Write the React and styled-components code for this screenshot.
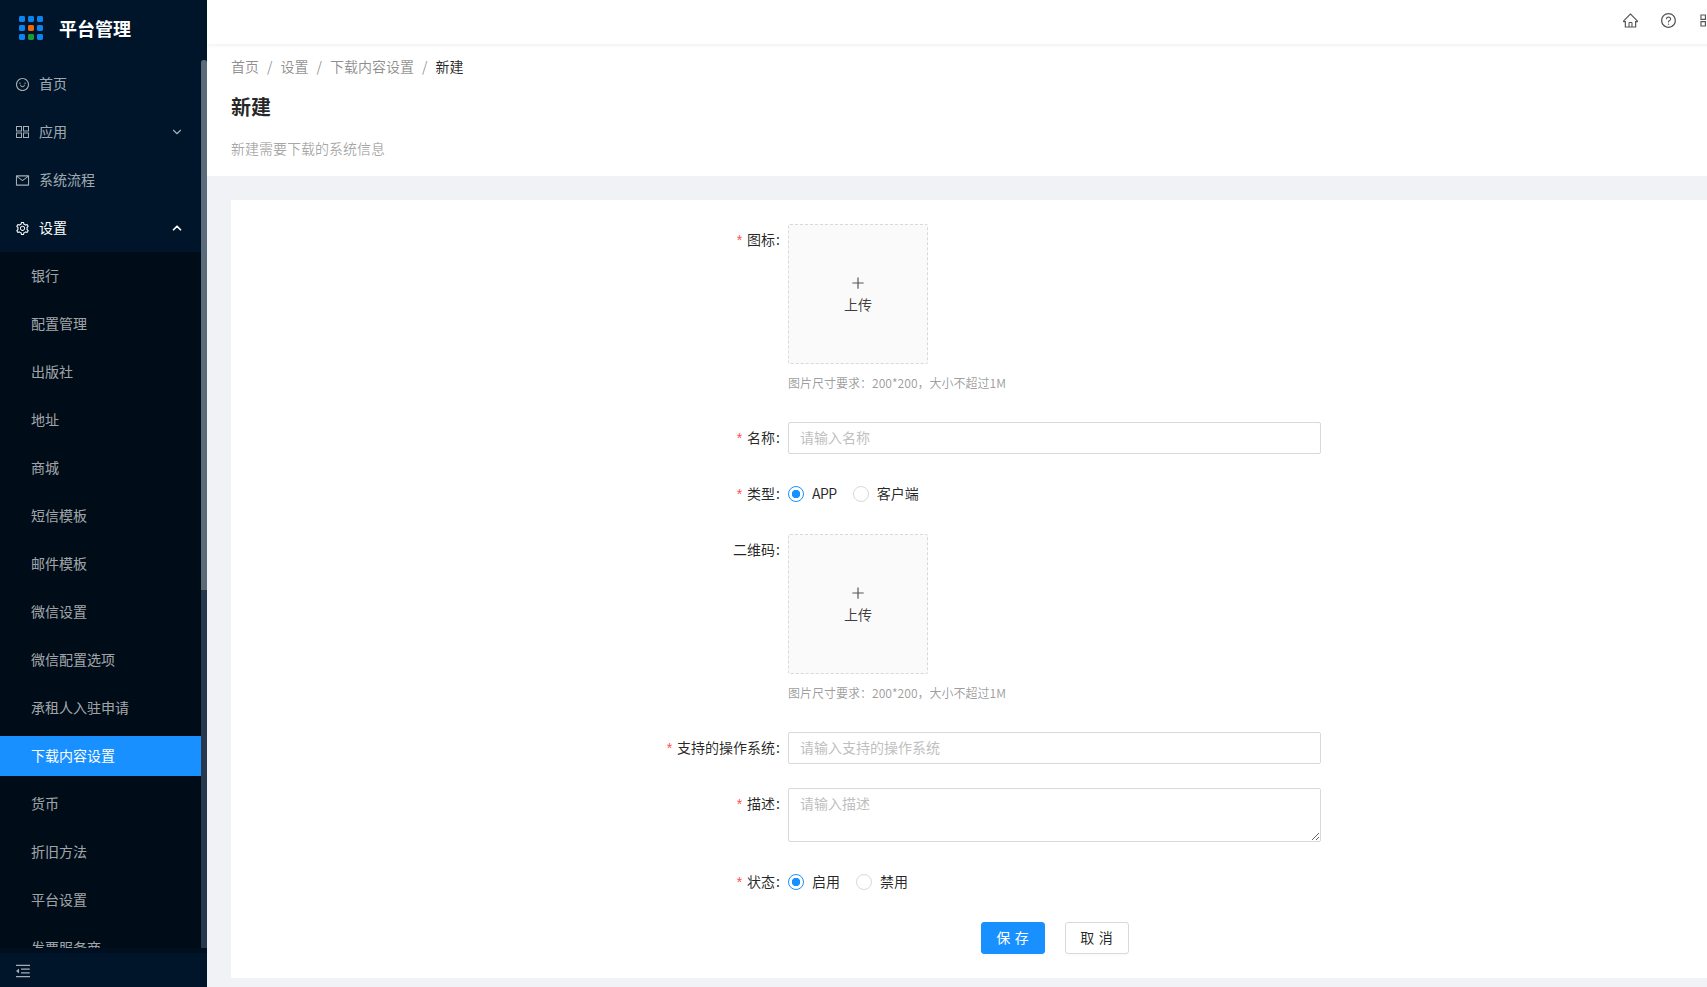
import React from 'react';
import styled, { createGlobalStyle } from 'styled-components';
import {
  AiOutlineSmile,
  AiOutlineAppstore,
  AiOutlineMail,
  AiOutlineSetting,
  AiOutlineHome,
  AiOutlineQuestionCircle,
  AiOutlinePlus,
  AiOutlineMenuFold,
} from 'react-icons/ai';
import { ChevronDown, ChevronUp } from 'lucide-react';

const subItems = [
  '银行',
  '配置管理',
  '出版社',
  '地址',
  '商城',
  '短信模板',
  '邮件模板',
  '微信设置',
  '微信配置选项',
  '承租人入驻申请',
  '下载内容设置',
  '货币',
  '折旧方法',
  '平台设置',
  '发票服务商',
];

function Logo() {
  const colors = ['#0a84f0', '#0a84f0', '#0a84f0', '#0a84f0', '#f0660a', '#0a84f0', '#0a84f0', '#1a9a3a', '#0a84f0'];
  return (
    <svg width="24" height="24" viewBox="0 0 24 24">
      {colors.map((c, i) => (
        <rect key={i} x={(i % 3) * 9} y={Math.floor(i / 3) * 9} width="6" height="6" rx="1.4" fill={c} />
      ))}
    </svg>
  );
}

// the sidebar's app icon is four wide tiles, not the square ones of the package
function AppsIcon() {
  return (
    <svg width="13" height="12" viewBox="0 0 13 12" fill="none" stroke="currentColor">
      <rect x="0.5" y="0.5" width="5" height="4.5" />
      <rect x="7.5" y="0.5" width="5" height="4.5" />
      <rect x="0.5" y="7" width="5" height="4.5" />
      <rect x="7.5" y="7" width="5" height="4.5" />
    </svg>
  );
}

function UploadField({ label, required }) {
  return (
    <FormRow>
      <Label $required={required}>{label}</Label>
      <div>
        <UploadBox>
          <AiOutlinePlus size={16} color="#555" />
          <UploadText>上传</UploadText>
        </UploadBox>
        <Hint>图片尺寸要求：200*200，大小不超过1M</Hint>
      </div>
    </FormRow>
  );
}

function RadioGroup({ label, options }) {
  return (
    <FormRow>
      <Label $required>{label}</Label>
      <Radios>
        {options.map((o, i) => (
          <RadioItem key={o}>
            <RadioDot $checked={i === 0} />
            <RadioText $latin={/^[A-Z]+$/.test(o)}>{o}</RadioText>
          </RadioItem>
        ))}
      </Radios>
    </FormRow>
  );
}

export default function App() {
  return (
    <Shell>
      <GlobalStyle />
      <Sider>
        <LogoRow>
          <Logo />
          <LogoTitle>平台管理</LogoTitle>
        </LogoRow>
        <MenuViewport>
          <Menu>
            <MenuItem>
              <IconSlot>
                <AiOutlineSmile size={17} />
              </IconSlot>
              <MenuText>首页</MenuText>
            </MenuItem>
            <MenuItem>
              <IconSlot>
                <AppsIcon />
              </IconSlot>
              <MenuText>应用</MenuText>
              <Arrow>
                <ChevronDown size={14} strokeWidth={2} />
              </Arrow>
            </MenuItem>
            <MenuItem>
              <IconSlot>
                <AiOutlineMail size={17} />
              </IconSlot>
              <MenuText>系统流程</MenuText>
            </MenuItem>
            <MenuItem $open>
              <IconSlot>
                <AiOutlineSetting size={17} />
              </IconSlot>
              <MenuText>设置</MenuText>
              <Arrow>
                <ChevronUp size={14} strokeWidth={3} />
              </Arrow>
            </MenuItem>
            <SubMenu>
              {subItems.map((s) => (
                <SubItem key={s} $active={s === '下载内容设置'}>
                  {s}
                </SubItem>
              ))}
            </SubMenu>
          </Menu>
          <ScrollTrack>
            <ScrollThumb />
          </ScrollTrack>
        </MenuViewport>
        <SiderFooter>
          <AiOutlineMenuFold size={18} />
        </SiderFooter>
      </Sider>
      <Main>
        <TopBar>
          <AiOutlineHome size={17} />
          <AiOutlineQuestionCircle size={17} />
          <AiOutlineAppstore size={17} />
        </TopBar>
        <PageHeader>
          <Breadcrumb>
            <span>首页</span>
            <Sep>/</Sep>
            <span>设置</span>
            <Sep>/</Sep>
            <span>下载内容设置</span>
            <Sep>/</Sep>
            <Current>新建</Current>
          </Breadcrumb>
          <PageTitle>新建</PageTitle>
          <PageDesc>新建需要下载的系统信息</PageDesc>
        </PageHeader>
        <Content>
          <Card>
            <UploadField label="图标" required />
            <FormRow>
              <Label $required>名称</Label>
              <TextInput placeholder="请输入名称" />
            </FormRow>
            <RadioGroup label="类型" options={['APP', '客户端']} />
            <UploadField label="二维码" />
            <FormRow>
              <Label $required>支持的操作系统</Label>
              <TextInput placeholder="请输入支持的操作系统" />
            </FormRow>
            <FormRow>
              <Label $required>描述</Label>
              <TextArea placeholder="请输入描述" />
            </FormRow>
            <RadioGroup label="状态" options={['启用', '禁用']} />
            <FormRow $last>
              <span />
              <Actions>
                <Button $primary>保 存</Button>
                <Button>取 消</Button>
              </Actions>
            </FormRow>
          </Card>
        </Content>
      </Main>
    </Shell>
  );
}

const GlobalStyle = createGlobalStyle`
  html, body {
    margin: 0;
    height: 100%;
    overflow: hidden;
    background: #f0f2f5;
  }
  body {
    font-family: "Noto Sans CJK SC", "Noto Sans", sans-serif;
    font-size: 14px;
    color: rgba(0, 0, 0, 0.85);
  }
  * {
    box-sizing: border-box;
  }
`;

const Shell = styled.div`
  display: flex;
  width: 1731px;
  height: 987px;
  overflow: hidden;
`;

const Sider = styled.aside`
  flex: none;
  display: flex;
  flex-direction: column;
  width: 207px;
  height: 100%;
  background: #001529;
`;

const LogoRow = styled.div`
  flex: none;
  display: flex;
  align-items: center;
  gap: 16px;
  height: 60px;
  padding: 0 0 4px 19px;
`;

const LogoTitle = styled.h1`
  margin: 0;
  font-size: 18px;
  font-weight: 700;
  color: #fff;
`;

const MenuViewport = styled.div`
  flex: 1;
  display: flex;
  min-height: 0;
`;

const Menu = styled.nav`
  flex: 1;
  min-width: 0;
  padding-top: 4px;
  overflow: hidden;
`;

const MenuItem = styled.div`
  display: flex;
  align-items: center;
  gap: 9px;
  height: 40px;
  margin-bottom: 8px;
  padding: 0 24px 0 15px;
  color: ${(p) => (p.$open ? '#fff' : 'rgba(255, 255, 255, 0.65)')};
`;

const IconSlot = styled.span`
  flex: none;
  display: flex;
  justify-content: center;
  width: 15px;
`;

const MenuText = styled.span`
  line-height: 20px;
  padding-bottom: 2px;
`;

const Arrow = styled.span`
  display: flex;
  margin-left: auto;
  margin-right: -7px;
`;

const SubMenu = styled.div`
  display: flex;
  flex-direction: column;
  gap: 8px;
  margin-top: -4px;
  padding-top: 4px;
  background: #000c17;
`;

const SubItem = styled.div`
  height: 40px;
  padding-left: 31px;
  line-height: 38px;
  color: ${(p) => (p.$active ? '#fff' : 'rgba(255, 255, 255, 0.65)')};
  background: ${(p) => (p.$active ? '#1890ff' : 'transparent')};
`;

const ScrollTrack = styled.div`
  flex: none;
  width: 6px;
  background: #26394d;
  border-radius: 3px 3px 0 0;
`;

const ScrollThumb = styled.div`
  height: 530px;
  background: #5c6b7a;
  border-radius: 3px 3px 0 0;
`;

const SiderFooter = styled.div`
  flex: none;
  display: flex;
  align-items: center;
  height: 39px;
  padding: 7px 0 0 14px;
  color: rgba(255, 255, 255, 0.65);
  background: #001529;
  box-shadow: inset 0 5px 0 #000f20;
`;

const Main = styled.main`
  flex: 1;
  min-width: 0;
  display: flex;
  flex-direction: column;
`;

const TopBar = styled.header`
  flex: none;
  display: flex;
  align-items: center;
  justify-content: flex-end;
  gap: 21px;
  height: 44px;
  padding: 0 16px 4px 0;
  color: #555;
  background: #fff;
  box-shadow: 0 1px 4px rgba(0, 21, 41, 0.08);
  position: relative;
`;

const PageHeader = styled.section`
  flex: none;
  padding: 11px 24px 17px;
  background: #fff;
`;

const Breadcrumb = styled.div`
  display: flex;
  line-height: 22px;
  color: rgba(0, 0, 0, 0.45);
`;

const Sep = styled.span`
  margin: 0 8px;
`;

const Current = styled.span`
  color: rgba(0, 0, 0, 0.85);
`;

const PageTitle = styled.h2`
  margin: 16px 0;
  font-size: 20px;
  line-height: 28px;
  font-weight: 600;
  color: rgba(0, 0, 0, 0.85);
`;

const PageDesc = styled.p`
  margin: 0;
  line-height: 22px;
  color: rgba(0, 0, 0, 0.35);
`;

const Content = styled.div`
  flex: 1;
  padding: 24px 24px 0;
`;

const Card = styled.div`
  padding: 24px 0;
  background: #fff;
`;

const FormRow = styled.div`
  display: grid;
  grid-template-columns: 549px 533px;
  column-gap: 8px;
  margin-bottom: ${(p) => (p.$last ? '0' : '24px')};
`;

const Label = styled.label`
  display: block;
  text-align: right;
  line-height: 30px;
  height: 32px;
  color: rgba(0, 0, 0, 0.85);

  &::before {
    content: ${(p) => (p.$required ? "'*'" : 'none')};
    margin-right: 5px;
    font-family: "Liberation Sans", sans-serif;
    color: #ff4d4f;
  }

  &::after {
    content: ':';
    margin-left: 1px;
  }
`;

const UploadBox = styled.div`
  display: flex;
  flex-direction: column;
  align-items: center;
  justify-content: center;
  width: 140px;
  height: 140px;
  padding-top: 3px;
  background: #fafafa;
  border: 1px dashed #d9d9d9;
  border-radius: 2px;
`;

const UploadText = styled.div`
  margin-top: 2px;
  padding-bottom: 1px;
  line-height: 22px;
  color: rgba(0, 0, 0, 0.75);
`;

const Hint = styled.div`
  margin: 8px 0 4px;
  font-size: 12px;
  line-height: 22px;
  color: rgba(0, 0, 0, 0.4);
`;

const TextInput = styled.input`
  display: block;
  width: 100%;
  height: 32px;
  padding: 3px 11px 5px;
  font: inherit;
  line-height: 22px;
  color: rgba(0, 0, 0, 0.85);
  border: 1px solid #d9d9d9;
  border-radius: 2px;
  outline: none;

  &::placeholder {
    color: #bfbfbf;
  }
`;

const TextArea = styled.textarea`
  display: block;
  width: 100%;
  height: 54px;
  padding: 3px 11px;
  font: inherit;
  line-height: 22px;
  border: 1px solid #d9d9d9;
  border-radius: 2px;
  outline: none;

  &::placeholder {
    color: #bfbfbf;
  }
`;

const Radios = styled.div`
  display: flex;
  align-items: center;
  gap: 16px;
  height: 32px;
`;

const RadioItem = styled.label`
  display: flex;
  align-items: center;
  gap: 8px;
  color: rgba(0, 0, 0, 0.85);
`;

const RadioText = styled.span`
  line-height: 20px;
  padding-bottom: 2px;
  letter-spacing: ${(p) => (p.$latin ? '-0.5px' : '0')};
`;

const RadioDot = styled.span`
  display: block;
  width: 16px;
  height: 16px;
  border-radius: 50%;
  border: 1px solid ${(p) => (p.$checked ? '#1890ff' : '#d9d9d9')};
  background: ${(p) => (p.$checked ? 'radial-gradient(circle, #1890ff 0 4px, #fff 4.5px)' : '#fff')};
`;

const Actions = styled.div`
  display: flex;
  justify-content: center;
  gap: 20px;
`;

const Button = styled.button`
  width: 64px;
  height: 32px;
  padding: 0 0 2px;
  font: inherit;
  word-spacing: 1.5px;
  color: ${(p) => (p.$primary ? '#fff' : 'rgba(0, 0, 0, 0.85)')};
  background: ${(p) => (p.$primary ? '#1890ff' : '#fff')};
  border: 1px solid ${(p) => (p.$primary ? '#1890ff' : '#d9d9d9')};
  border-radius: 3px;
  box-shadow: 0 2px 0 rgba(0, 0, 0, 0.015);
`;
